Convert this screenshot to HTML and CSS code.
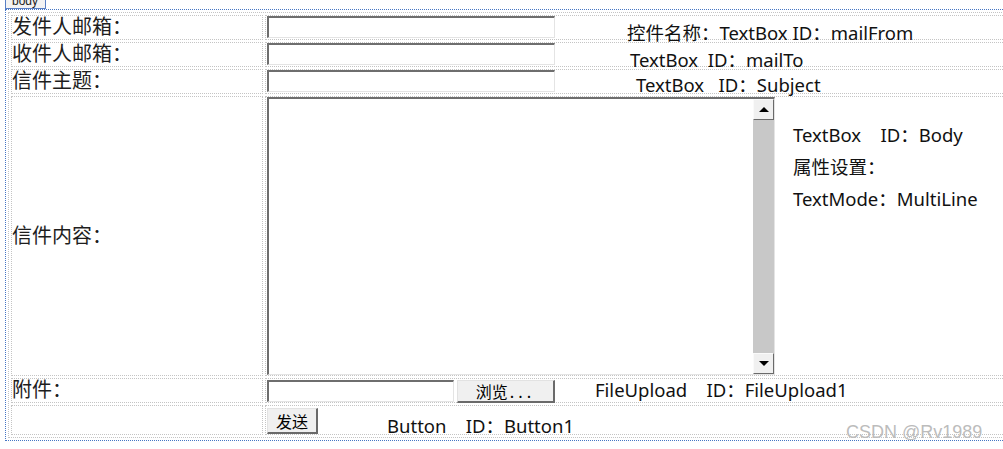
FILE: index.html
```html
<!DOCTYPE html>
<html lang="zh-CN">
<head>
    <meta charset="UTF-8">
    <meta name="viewport" content="width=device-width, initial-scale=1.0">
    <title>发送邮件</title>
    <link rel="stylesheet" href="styles.css">
</head>
<body>
    <div class="tag">body</div>
    <div class="design">
        <table class="form">
            <tr>
                <td class="label">发件人邮箱：</td>
                <td class="field">
                    <div class="line">
                        <input type="text" class="box" id="mailFrom">
                        <span class="note note-from">控件名称：TextBox ID：mailFrom</span>
                    </div>
                </td>
            </tr>
            <tr>
                <td class="label">收件人邮箱：</td>
                <td class="field">
                    <div class="line">
                        <input type="text" class="box" id="mailTo">
                        <span class="note note-to">TextBox&nbsp; ID：mailTo</span>
                    </div>
                </td>
            </tr>
            <tr>
                <td class="label">信件主题：</td>
                <td class="field">
                    <div class="line">
                        <input type="text" class="box" id="Subject">
                        <span class="note note-subject">TextBox&nbsp;&nbsp; ID：Subject</span>
                    </div>
                </td>
            </tr>
            <tr>
                <td class="label">信件内容：</td>
                <td class="field">
                    <div class="line tall">
                        <div class="memo">
                            <textarea id="Body"></textarea>
                            <div class="vscroll">
                                <div class="sb-btn"><span class="arrow-up"></span></div>
                                <div class="sb-track"></div>
                                <div class="sb-btn"><span class="arrow-down"></span></div>
                            </div>
                        </div>
                        <div class="note note-body">
                            <div>TextBox&nbsp;&nbsp;&nbsp; ID：Body</div>
                            <div>属性设置：</div>
                            <div>TextMode：MultiLine</div>
                        </div>
                    </div>
                </td>
            </tr>
            <tr>
                <td class="label">附件：</td>
                <td class="field">
                    <div class="line">
                        <input type="text" class="box file" id="FileUpload1">
                        <button class="btn browse">浏览<span class="dots">...</span></button>
                        <span class="note note-file">FileUpload&nbsp;&nbsp;&nbsp; ID：FileUpload1</span>
                    </div>
                </td>
            </tr>
            <tr>
                <td class="label"></td>
                <td class="field">
                    <div class="line send">
                        <button class="btn send-btn" id="Button1">发送</button>
                        <span class="note note-button">Button&nbsp;&nbsp;&nbsp; ID：Button1</span>
                    </div>
                </td>
            </tr>
        </table>
    </div>
    <div class="watermark">CSDN @Rv1989</div>
</body>
</html>
```

FILE: styles.css
```css
*{
    box-sizing: border-box;
}
html, body{
    margin: 0;
    padding: 0;
    background: #fff;
    overflow: hidden;
}
body{
    position: relative;
    font-family: "Noto Sans", "Noto Sans CJK SC", sans-serif;
    color: #111;
}

/* designer tag and body outline */
.tag{
    margin-left: 5px;
    width: 41px;
    height: 9px;
    padding-left: 6px;
    border: 1px solid #5a80c6;
    border-top: 0;
    background: #f3f3f3;
    font: 12px/3px "Liberation Sans", sans-serif;
    color: #222;
    overflow: hidden;
}
.design{
    width: 1030px;
    margin-left: 5px;
    padding: 2px;
    border: 1px dotted #4676c4;
    border-right: 0;
}

/* layout table */
.form{
    width: 1020px;
    border: 1px dotted #c4c4c4;
    border-spacing: 2px;
}
.form td{
    border: 1px dotted #c4c4c4;
    padding: 0;
}
.label{
    width: 252px;
    padding-bottom: 3px !important;
    font-family: "Noto Sans CJK SC", sans-serif;
    font-size: 20px;
    line-height: 20px;
    color: #1e1e1e;
    vertical-align: middle;
}
.field{
    vertical-align: top;
}
.line{
    display: flex;
    align-items: flex-start;
    height: 23px;
    white-space: nowrap;
}
.line.tall{
    height: 278px;
}
.line.send{
    height: 28px;
}

/* controls */
.box{
    margin: 0 0 0 1px;
    width: 288px;
    height: 22px;
    padding: 0 2px;
    border-style: solid;
    border-width: 2px 1px 1px 2px;
    border-color: #6e6e6e #e4e4e4 #e4e4e4 #6e6e6e;
    background: #fff;
    font: 14px "Noto Sans", sans-serif;
    outline: none;
}
.box.file{
    margin-top: 1px;
    width: 187px;
}
.memo{
    display: flex;
    margin-left: 1px;
    width: 508px;
    height: 278px;
    border-style: solid;
    border-width: 2px 1px 1px 2px;
    border-color: #6e6e6e #e4e4e4 #e4e4e4 #6e6e6e;
    background: #fff;
}
.memo textarea{
    flex: 1;
    border: 0;
    padding: 2px;
    resize: none;
    outline: none;
    font: 14px "Noto Sans", sans-serif;
}
.vscroll{
    display: flex;
    flex-direction: column;
    width: 21px;
    background: #c8c8c8;
}
.sb-btn{
    display: flex;
    justify-content: center;
    align-items: center;
    height: 21px;
    background: #f0f0f0;
    border: 1px solid;
    border-color: #fafafa #6a6a6a #6a6a6a #fafafa;
}
.sb-track{
    flex: 1;
}
.arrow-up{
    border-left: 5px solid transparent;
    border-right: 5px solid transparent;
    border-bottom: 5px solid #000;
}
.arrow-down{
    border-left: 5px solid transparent;
    border-right: 5px solid transparent;
    border-top: 5px solid #000;
}
.btn{
    padding: 0;
    background: #f0f0f0;
    border-style: solid;
    border-width: 1px 2px 2px 1px;
    border-color: #e2e2e2 #6a6a6a #6a6a6a #e2e2e2;
    font: 16px/20px "Noto Sans CJK SC", sans-serif;
    color: #000;
}
.browse{
    margin: 1px 0 0 3px;
    width: 98px;
    height: 23px;
}
.dots{
    letter-spacing: 4px;
    margin-left: 2px;
}
.send-btn{
    margin: 2px 0 0 1px;
    width: 51px;
    height: 26px;
}

/* control notes */
.note{
    font-size: 18.5px;
    line-height: 20px;
    color: #111;
}
.note-from{
    margin: 7px 0 0 72px;
}
.note-to{
    margin: 7px 0 0 75px;
}
.note-subject{
    margin: 5px 0 0 81px;
}
.note-body{
    margin: 22px 0 0 18px;
    line-height: 32px;
}
.note-file{
    margin: 1px 0 0 40px;
}
.note-button{
    margin: 10px 0 0 69px;
}

.watermark{
    position: absolute;
    left: 846px;
    top: 422px;
    font: 18px/20px "Liberation Sans", sans-serif;
    color: #bcbcbc;
}
```
